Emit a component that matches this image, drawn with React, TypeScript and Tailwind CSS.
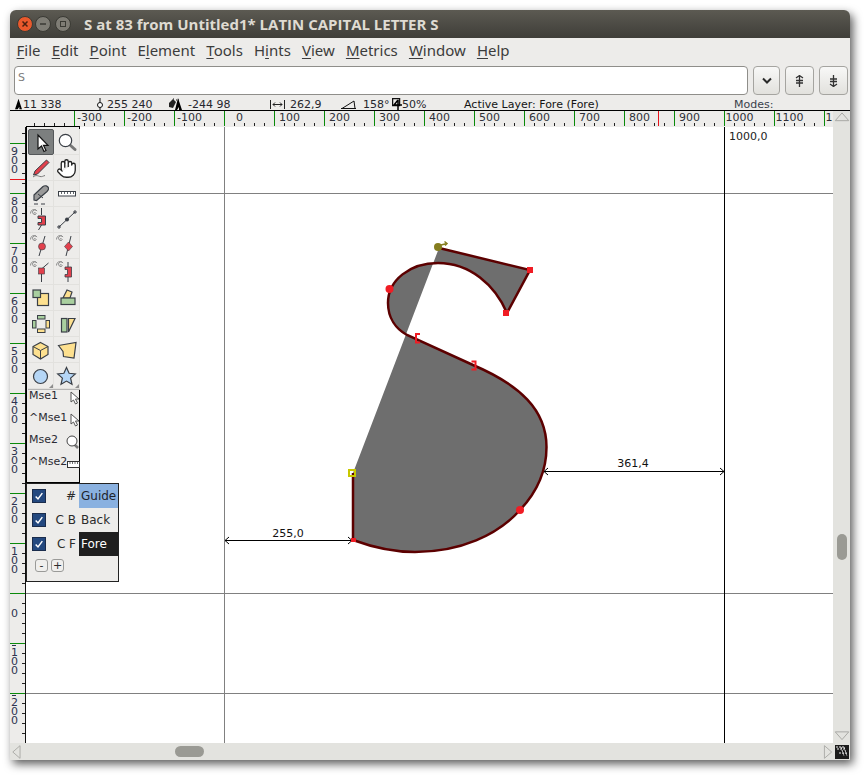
import type { ReactNode } from "react";
import { Hand } from "lucide-react";

const dejavu = { fontFamily: '"DejaVu Sans", sans-serif' };
const menus: Array<[string, string, string]> = [
  ["", "F", "ile"],
  ["", "E", "dit"],
  ["", "P", "oint"],
  ["E", "l", "ement"],
  ["", "T", "ools"],
  ["H", "i", "nts"],
  ["", "V", "iew"],
  ["", "M", "etrics"],
  ["", "W", "indow"],
  ["", "H", "elp"],
];

const INK = "#3a3f46";
const RED = "#e2404c";
const YEL = "#fde08f";
const GRN = "#a9cf9f";
const BLU = "#b5d6f6";

function Spiral() {
  return <path d="M6 6.500a1 1 0 1 1 1.500 1 2.400 2.400 0 1 1 1.600-3.400M2.500 6.500a3.600 3.600 0 0 1 6-3" fill="none" stroke="#8d8d8d" strokeWidth="1" />;
}

function Tip() {
  return <path d="M25 21v4h-4z" fill="#8d8d8d" />;
}

const tools: ReactNode[] = [
  <path d="M9 5v14l3.500-3 2.500 5.500 2-1-2.500-5.200H19z" fill="#fff" stroke="#111" strokeWidth="1.200" />,
  <>
    <path d="M16 16l5 4.500" stroke="#777" strokeWidth="3" strokeLinecap="round" />
    <circle cx="11.500" cy="11.500" r="6.200" fill="#fff" stroke={INK} strokeWidth="1.200" />
  </>,
  <>
    <path d="M7 16L18.500 5l2.500 2.500L9.500 19l-4 1z" fill={RED} stroke={INK} strokeWidth="1" />
    <path d="M5 22c3-2.500 5-1 7-.5s3-.5 5-1" fill="none" stroke="#777" strokeWidth="1" />
  </>,
  null,
  <>
    <path d="M6 14L15 5.500c2-1.500 5-.5 5.500 1.500.3 1.500-.5 2.500-1.500 3.500L8.500 19.500 6 19z" fill="#9a9a9a" stroke={INK} strokeWidth="1.200" />
    <path d="M10 13l5 4" stroke={INK} strokeWidth="1" />
    <path d="M6 23h4m3 0h4" stroke={INK} strokeWidth="1" />
  </>,
  <>
    <rect x="4.500" y="10.500" width="17" height="4.500" fill="#fff" stroke={INK} />
    <path d="M7.500 11v2M10.500 11v2M13.500 11v2M16.500 11v2M19.500 11v2" stroke={INK} strokeWidth="0.800" />
  </>,
  <>
    <Spiral />
    <path d="M13.500 1v7M13.500 18l-3 5" stroke={INK} />
    <path d="M10 9h7.500v9H10v-2.500h3.500v-4H10z" fill={RED} stroke={INK} strokeWidth="1" />
  </>,
  <>
    <path d="M5 20L21 5" stroke={INK} />
    <circle cx="13" cy="12.500" r="2" fill={INK} />
    <path d="M3 20h4M5 18v4M19 5h4M21 3v4" stroke={INK} />
  </>,
  <>
    <Spiral />
    <path d="M11 23l6-20" stroke={INK} />
    <circle cx="14" cy="13.500" r="3.500" fill={RED} stroke={INK} strokeWidth="0.600" />
  </>,
  <>
    <Spiral />
    <path d="M12 23l5-20" stroke={INK} />
    <path d="M14.500 9l4 4.500-4 4.500-4-4.500z" fill={RED} stroke={INK} strokeWidth="0.600" />
  </>,
  <>
    <Spiral />
    <path d="M13.500 15v8M13.500 10l7-6" stroke={INK} />
    <rect x="10.500" y="9" width="6" height="6" fill={RED} stroke={INK} strokeWidth="0.600" />
  </>,
  <>
    <Spiral />
    <path d="M14 3v5M14 18v5" stroke={INK} />
    <path d="M11 8h6.500v10H11v-2.500h2.500v-5H11z" fill={RED} stroke={INK} strokeWidth="0.800" />
  </>,
  <>
    <rect x="9.500" y="8.500" width="11" height="12" fill={YEL} stroke={INK} strokeWidth="1.200" />
    <rect x="5" y="5" width="7.500" height="7.500" fill={GRN} stroke={INK} strokeWidth="1.200" />
  </>,
  <>
    <path d="M9 13l4-8 5 2-2 6z" fill={YEL} stroke={INK} strokeWidth="1.200" />
    <rect x="7" y="13" width="14" height="6.500" fill={GRN} stroke={INK} strokeWidth="1.200" />
  </>,
  <>
    <rect x="9.500" y="4.500" width="7.500" height="3.500" fill={GRN} stroke={INK} />
    <rect x="4.500" y="9.500" width="3.500" height="7.500" fill={GRN} stroke={INK} />
    <rect x="18" y="9.500" width="3.500" height="7.500" fill={YEL} stroke={INK} />
    <rect x="9.500" y="18" width="7.500" height="3.500" fill={YEL} stroke={INK} />
  </>,
  <>
    <rect x="7.500" y="7.500" width="5.500" height="13.500" fill={GRN} stroke={INK} strokeWidth="1.200" />
    <path d="M14.500 7.500H21L14.500 21z" fill={YEL} stroke={INK} strokeWidth="1.200" />
  </>,
  <>
    <path d="M12.500 5.500l7.500 4v8l-7.500 4.500L5 17.500v-8z" fill={YEL} stroke={INK} strokeWidth="1.200" />
    <path d="M5 9.500l7.500 4 7.500-4M12.500 13.500V22" fill="none" stroke={INK} />
  </>,
  <path d="M4.500 8.500L22 5.500l-2 15.500-10.500-1.500-.5-5z" fill={YEL} stroke={INK} strokeWidth="1.200" />,
  <>
    <circle cx="12.500" cy="13.500" r="7" fill={BLU} stroke={INK} strokeWidth="1.200" />
    <Tip />
  </>,
  <>
    <path d="M12.500 4.500l2.600 5.800 6.200.6-4.700 4.200 1.400 6.200-5.500-3.200-5.500 3.200 1.400-6.200-4.700-4.200 6.200-.6z" fill={BLU} stroke={INK} strokeWidth="1.200" />
    <Tip />
  </>,
];

function MiniArrow() {
  return (
    <svg viewBox="0 0 10 14" className="w-[10px] h-[14px] -mr-px">
      <path d="M1 1v10l2.500-2L5.500 13l2-1-2-4H9z" fill="#fff" stroke="#555" />
    </svg>
  );
}

function MiniLens() {
  return (
    <svg viewBox="0 0 13 14" className="w-[13px] h-[14px]">
      <path d="M8 9l4 4" stroke="#777" strokeWidth="2.500" />
      <circle cx="6" cy="6" r="5" fill="#fff" stroke="#444" />
    </svg>
  );
}

function MiniRuler() {
  return (
    <svg viewBox="0 0 13 7" className="w-[13px] h-[7px] mt-[4px]">
      <rect x="0.500" y="0.500" width="12" height="6" fill="#fff" stroke="#333" />
      <path d="M3 1v2M5.500 1v2M8 1v2M10.500 1v2" stroke="#333" strokeWidth="0.700" />
    </svg>
  );
}

const mouseRows: Array<[string, ReactNode]> = [
  ["Mse1", <MiniArrow />],
  ["^Mse1", <MiniArrow />],
  ["Mse2", <MiniLens />],
  ["^Mse2", <MiniRuler />],
];

function Toolbox() {
  return (
    <div className="absolute left-0 -top-px w-[54px] h-[357px] border border-black bg-[#edecea] text-[#2b2b33] text-[11px]" style={dejavu}>
      <div className="grid grid-cols-[26px_26px] mt-[2px] ml-px border-b border-[#b5b5b5] w-[52px]">
        {tools.map((t, i) => (
          <div
            key={i}
            className={
              i === 0
                ? "h-[26px] bg-[#7c7f7f] border border-[#55585a] rounded-[2px]"
                : "h-[26px] border-r border-b border-[#e2e1de]"
            }
          >
            {i === 3 ? (
              <Hand size={21} fill="#fff" stroke="#222" strokeWidth={1.5} className="ml-[2px] mt-[3px]" />
            ) : (
              <svg viewBox="0 0 26 26" className="w-[26px] h-[26px]">
                {t}
              </svg>
            )}
          </div>
        ))}
      </div>
      <div className="-mt-px pl-[2px]">
        {mouseRows.map(([label, icon]) => (
          <div key={label} className="flex h-[22px] justify-between items-start">
            <span className="leading-[12px] mt-px">{label}</span>
            <span className="mt-[2px]">{icon}</span>
          </div>
        ))}
      </div>
    </div>
  );
}

const layers: Array<[string, string, string]> = [
  ["#", "Guide", "bg-[#8ab1e0] text-[#20242c]"],
  ["C B", "Back", "text-[#2b2b2b]"],
  ["C F", "Fore", "bg-[#1f1f1f] text-white"],
];

function LayerPanel() {
  return (
    <div className="absolute left-0 top-[356px] w-[93px] h-[99px] border border-[#222] bg-[#edecea] text-[12px] text-[#2b2b2b]" style={dejavu}>
      {layers.map(([tag, name, cls]) => (
        <div key={name} className="flex h-[24px] items-center">
          <span className="w-[14px] h-[14px] ml-[5px] bg-[#23487f] border border-[#1a2c4c] flex items-center justify-center">
            <svg viewBox="0 0 12 12" className="w-[10px] h-[10px]">
              <path d="M2 6.500l2.800 3L10 2.500" fill="none" stroke="#fff" strokeWidth="1.800" />
            </svg>
          </span>
          <span className="w-[30px] text-right">{tag}</span>
          <span className={`ml-[3px] w-[39px] h-[24px] pl-[2px] leading-[24px] ${cls}`}>{name}</span>
        </div>
      ))}
      <div className="flex ml-[8px] mt-[3px] gap-[3px]">
        {["-", "+"].map((s) => (
          <span key={s} className="w-[13px] h-[13px] rounded-[3px] border border-[#9a9a98] bg-[#f0efed] flex items-center justify-center text-[11px] leading-none">
            {s}
          </span>
        ))}
      </div>
    </div>
  );
}

function TopRuler() {
  const ticks = Array.from({ length: 80 }, (_, i) => 34.5 + i * 10);
  const labels = Array.from({ length: 16 }, (_, i) => -300 + i * 100);
  return (
    <svg viewBox="10 111 823 16" className="block w-[823px] h-[16px]" style={dejavu}>
      {ticks.map((x) => (
        <path key={x} d={`M${x} 123v3`} stroke="#222" />
      ))}
      {labels.map((v, i) => (
        <g key={v}>
          <path d={`M${74.5 + i * 50} 111v15`} stroke="#0a8a0a" />
          <text x={89.5 + i * 50} y="121" fontSize="11" textAnchor="middle" fill="#2e3038">
            {v}
          </text>
        </g>
      ))}
      <path d="M658.500 111v15" stroke="#e8141c" />
    </svg>
  );
}

function LeftRuler() {
  const ticks = Array.from({ length: 62 }, (_, i) => 133.5 + i * 10);
  const labels = Array.from({ length: 12 }, (_, i) => 900 - i * 100);
  return (
    <svg viewBox="10 127 16 616" className="block w-[16px] h-[616px]" style={dejavu}>
      <path d="M25.500 127v616" stroke="#111" />
      {ticks.map((y) => (
        <path key={y} d={`M22 ${y}h3`} stroke="#222" />
      ))}
      {labels.map((v, i) => {
        const y0 = 143.5 + i * 50;
        const digits = String(Math.abs(v)).split("");
        return (
          <g key={v}>
            <path d={`M10 ${y0}h15`} stroke="#0a8a0a" />
            {v > 0 &&
              digits.map((d, k) => (
                <text key={k} x="14.500" y={y0 + 11.5 + k * 9} fontSize="11" textAnchor="middle" fill="#2e3350">
                  {d}
                </text>
              ))}
            {v === 0 && (
              <text x="14.500" y={y0 + 23.5} fontSize="11" textAnchor="middle" fill="#2e3350">
                0
              </text>
            )}
            {v < 0 && (
              <>
                <path d={`M12 ${y0 + 2}h4`} stroke="#2e3350" />
                {digits.map((d, k) => (
                  <text key={k} x="14.500" y={y0 + 12.5 + k * 9} fontSize="11" textAnchor="middle" fill="#2e3350">
                    {d}
                  </text>
                ))}
              </>
            )}
          </g>
        );
      })}
      <path d="M10 179.500h15" stroke="#e8141c" />
    </svg>
  );
}

const S_OPEN =
  "M439 248L530 270L507 313C495 285 470 263 438 263C410 263 388 280 388 303C388 318 396 329 407 335L473 365C520 385 546.500 410 546.500 447C546.500 470 537 492 520 510C498 535 460 552 415 552C393 552 372 547 353 540L353 473";

function GlyphCanvas() {
  return (
    <svg viewBox="26 127 807 616" className="absolute inset-0 w-[807px] h-[616px]" style={dejavu}>
      <path d="M26 193.500h807M26 593.500h807M26 693.500h807M224.500 127v616" stroke="#808080" />
      <path d="M724.500 127v616" stroke="#000" />
      <text x="729" y="140" fontSize="11" fill="#222">
        1000,0
      </text>

      <path d={`${S_OPEN}Z`} fill="#6e6e6e" fillRule="evenodd" />
      <path d={S_OPEN} fill="none" stroke="#5c0000" strokeWidth="2.500" />

      <path d="M225 540.500h127M229 537l-4 3.500 4 3.500M348 537l4 3.500-4 3.500" fill="none" stroke="#000" />
      <text x="288" y="537" fontSize="11" textAnchor="middle" fill="#111">
        255,0
      </text>
      <path d="M544 471.500h180M548 468l-4 3.500 4 3.500M720 468l4 3.500-4 3.500" fill="none" stroke="#000" />
      <text x="633" y="467" fontSize="11" textAnchor="middle" fill="#111">
        361,4
      </text>

      <circle cx="438" cy="247" r="4" fill="#857d1e" />
      <path d="M441 245l6-1.500M444.500 241.500l2.500 2-2 2" fill="none" stroke="#857d1e" strokeWidth="1.500" />
      <rect x="527" y="267" width="6" height="6" fill="#f01c24" />
      <rect x="503" y="310" width="6" height="6" fill="#f01c24" />
      <circle cx="389.500" cy="289" r="4" fill="#f01c24" />
      <path d="M420 334h-4v8.500h4M471.500 361.500h4v8h-4" fill="none" stroke="#f01c24" strokeWidth="2" />
      <circle cx="520" cy="510" r="4" fill="#f01c24" />
      <rect x="351" y="538" width="5" height="4" fill="#f01c24" />
      <rect x="349" y="470" width="6" height="6" fill="none" stroke="#c8c800" strokeWidth="2" />
    </svg>
  );
}

function Tri({ d, className }: { d: string; className: string }) {
  return (
    <svg viewBox="0 0 16 16" className={className}>
      <path d={d} fill="none" stroke="#a8a8a4" />
    </svg>
  );
}

function StatusBar() {
  return (
    <div className="h-[14px] border-b border-black flex items-center pt-px text-[11px] text-[#26262c] whitespace-nowrap leading-none relative" style={dejavu}>
      <svg viewBox="0 0 8 12" className="ml-[5px] w-[7px] h-[12px] mr-[1px]">
        <path d="M4 0L8 12H5V9L3 12H0z" fill="#000" />
      </svg>
      <span className="w-[73px]">11 338</span>
      <svg viewBox="0 0 8 13" className="w-[8px] h-[13px] mr-[3px]">
        <path d="M4 0v13" stroke="#111" />
        <circle cx="4" cy="7" r="2.500" fill="#fff" stroke="#111" />
      </svg>
      <span className="w-[61px]">255 240</span>
      <svg viewBox="0 0 15 12" className="w-[15px] h-[12px] mr-[5px]">
        <path d="M1 5l4-4 3 3-3 6-4-1z" fill="#222" />
        <path d="M8 2h4M5 1h2" stroke="#111" strokeDasharray="1 1" />
        <path d="M10 0l4 12h-3v-3l-2 3H7z" fill="#000" />
      </svg>
      <span className="w-[82px]">-244 98</span>
      <svg viewBox="0 0 15 11" className="w-[15px] h-[11px] mr-[5px]">
        <path d="M.5 1v9M14.500 1v9M3 5.500h9M5 3.500l-2 2 2 2M10 3.500l2 2-2 2" fill="none" stroke="#222" />
      </svg>
      <span className="w-[51px]">262,9</span>
      <svg viewBox="0 0 15 9" className="w-[15px] h-[9px] mr-[7px]">
        <path d="M0 8.500h15M1 8.500L13 1l1 7.500" fill="none" stroke="#111" />
      </svg>
      <span className="w-[29px]">158°</span>
      <svg viewBox="0 0 10 13" className="w-[10px] h-[13px]">
        <rect x="0.500" y="0.500" width="7" height="7" fill="none" stroke="#111" strokeWidth="1.500" />
        <path d="M6 2l-4 5h8M6 2v11" fill="none" stroke="#000" strokeWidth="1.500" />
      </svg>
      <span className="w-[62px]">50%</span>
      <span className="w-[270px] text-[#141414]">Active Layer: Fore (Fore)</span>
      <span className="text-[#3a3f4a]">Modes:</span>
    </div>
  );
}

function TitleButton({ color, className, children }: { color: string; className?: string; children: ReactNode }) {
  return (
    <span className={`w-[16px] h-[16px] rounded-full border border-[#3a3a34] flex items-center justify-center ${color} ${className ?? ""}`}>
      <svg viewBox="0 0 10 10" className="w-[10px] h-[10px]">
        {children}
      </svg>
    </span>
  );
}

function IconBtn({ w, children }: { w: string; children: ReactNode }) {
  return (
    <span className={`h-[29px] ${w} rounded-[4px] border border-[#a5a4a0] bg-gradient-to-b from-[#f8f8f7] to-[#e2e1dd] flex items-center justify-center`}>
      {children}
    </span>
  );
}

export default function App() {
  return (
    <div className="w-[866px] h-[776px] bg-white pt-[10px] pl-[10px]">
      <div className="w-[840px] h-[750px] flex flex-col rounded-t-[6px] bg-[#edecea] shadow-[3px_4px_10px_rgba(0,0,0,0.65)] overflow-hidden">
        <div className="h-[28px] shrink-0 flex items-center bg-gradient-to-b from-[#5c5a52] to-[#3f3e39] pl-[7px]">
          <div className="flex">
            <TitleButton color="bg-[#e9592c]">
              <path d="M2.500 2.500l5 5M7.500 2.500l-5 5" stroke="#4a2010" strokeWidth="1.500" />
            </TitleButton>
            <TitleButton color="bg-[#7f7d75]" className="ml-[2px]">
              <path d="M2 5h6" stroke="#3a3a34" strokeWidth="1.300" />
            </TitleButton>
            <TitleButton color="bg-[#7f7d75]" className="ml-[4px]">
              <rect x="2.500" y="2.500" width="5" height="5" fill="none" stroke="#3a3a34" />
            </TitleButton>
          </div>
          <span className="ml-[13px] text-[#dfdbd2] text-[15px] font-bold whitespace-nowrap" style={{ fontFamily: '"Open Sans", sans-serif' }}>
            S at 83 from Untitled1* LATIN CAPITAL LETTER S
          </span>
        </div>

        <div className="h-[28px] shrink-0 flex items-center pl-[1px] pb-[3px] text-[15px] text-[#3c3c3c]" style={{ fontFamily: '"Noto Sans", sans-serif' }}>
          {menus.map(([pre, key, rest]) => (
            <span key={key + rest} className="px-[5.55px]">
              {pre}
              <u className="underline-offset-2">{key}</u>
              {rest}
            </span>
          ))}
        </div>

        <div className="h-[31px] shrink-0 flex pl-[4px] gap-[5px]">
          <div className="w-[734px] h-[29px] rounded-[4px] border border-[#8f8e8a] bg-white text-[#7d7d7d] text-[11px] pl-[3px] pt-[3px]" style={dejavu}>
            S
          </div>
          <div className="flex gap-[5px]">
            <IconBtn w="w-[27px]">
              <svg viewBox="0 0 10 8" className="w-[10px] h-[8px]">
                <path d="M1 1.500l4 4 4-4" fill="none" stroke="#2a2a2a" strokeWidth="2" />
              </svg>
            </IconBtn>
            <IconBtn w="w-[29px]">
              <svg viewBox="0 0 9 12" className="w-[9px] h-[12px]">
                <path d="M4.500 0v12M1 3l3.500-2.500L8 3M1 5.500h7M1 8h7" fill="none" stroke="#333" strokeWidth="1.300" />
              </svg>
            </IconBtn>
            <IconBtn w="w-[29px]">
              <svg viewBox="0 0 9 12" className="w-[9px] h-[12px]">
                <path d="M4.500 0v12M1 9l3.500 2.500L8 9M1 6.500h7M1 4h7" fill="none" stroke="#333" strokeWidth="1.300" />
              </svg>
            </IconBtn>
          </div>
        </div>

        <StatusBar />

        <div className="flex-1 grid grid-cols-[16px_807px_17px] grid-rows-[16px_616px_17px]">
          <div className="col-span-2 bg-[#edecea]">
            <TopRuler />
          </div>
          <div className="row-span-2 bg-[#e3e3df] flex flex-col items-center">
            <Tri d="M1 10L8 2l7 8z" className="w-[16px] h-[16px]" />
            <div className="w-[10px] h-[26px] rounded-full bg-[#9a9a94] mt-[408px]" />
            <Tri d="M1 4l7 8 7-8z" className="w-[16px] h-[16px] mt-[168px]" />
          </div>
          <div className="bg-[#edecea]">
            <LeftRuler />
          </div>
          <div className="relative bg-white">
            <GlyphCanvas />
            <Toolbox />
            <LayerPanel />
          </div>
          <div className="col-span-2 bg-[#e3e3df] flex items-center pl-[1px]">
            <Tri d="M10 1L2 8l8 7z" className="w-[16px] h-[16px]" />
            <div className="w-[31px] h-[11px] rounded-full bg-[#9a9a94] ml-[150px]" />
            <Tri d="M6 1l8 7-8 7z" className="w-[16px] h-[16px] ml-[615px]" />
          </div>
          <div className="bg-[#e3e3df] flex items-center justify-center">
            <svg viewBox="0 0 14 14" className="w-[14px] h-[14px]">
              <rect width="14" height="14" fill="#1c1c1c" />
              <path d="M1 2h8M2 4h9M6 2l3 9M9 2l3 9M4 8h8" stroke="#eee" strokeWidth="1" strokeDasharray="2 1" />
            </svg>
          </div>
        </div>
      </div>
    </div>
  );
}
